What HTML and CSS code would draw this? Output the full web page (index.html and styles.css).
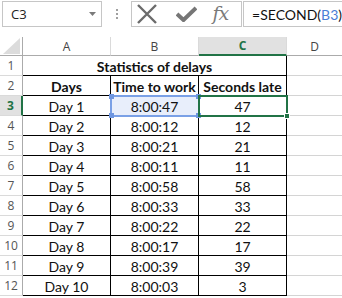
FILE: index.html
```html
<!DOCTYPE html>
<html>
<head>
<meta charset="utf-8">
<link rel="stylesheet" href="styles.css">
</head>
<body>
<div class="app">
  <div class="fbar">
    <div class="namebox">
      <span class="ref-name">C3</span>
      <svg class="drop" width="7" height="4" viewBox="0 0 7 4"><path d="M0 0H7L3.5 4Z" fill="#7a7a7a"/></svg>
    </div>
    <div class="grip"><i></i><i></i><i></i></div>
    <div class="btns">
      <svg class="ic-x" width="22" height="20" viewBox="0 0 22 20"><path d="M2 1L20 19M20 1L2 19" stroke="#6b6b6b" stroke-width="2.4" fill="none"/></svg>
      <svg class="ic-ok" width="21" height="16" viewBox="0 0 21 16"><path d="M1 8L7.5 14L20 2" stroke="#767676" stroke-width="4" fill="none" stroke-linejoin="miter"/></svg>
      <span class="fx">fx</span>
    </div>
    <div class="formula">=SECOND(<span class="b3">B3</span>)</div>
  </div>
  <div class="sheet">
    <div class="ch corner"><svg width="18" height="17" viewBox="0 0 18 17"><path d="M18 1V17H1Z" fill="#dcdcdc"/></svg></div>
    <div class="ch">A</div>
    <div class="ch">B</div>
    <div class="ch sel">C</div>
    <div class="ch last">D</div>

    <div class="rh">1</div>
    <div class="c title span3">Statistics of delays</div>
    <div class="c g"></div>

    <div class="rh">2</div>
    <div class="c bb br bold">Days</div>
    <div class="c bb br bold">Time to work</div>
    <div class="c bb br bold">Seconds late</div>
    <div class="c g"></div>

    <div class="rh sel">3</div>
    <div class="c bb br">Day 1</div>
    <div class="c bb br hl">8:00:47</div>
    <div class="c bb br">47</div>
    <div class="c g"></div>

    <div class="rh">4</div>
    <div class="c bb br">Day 2</div>
    <div class="c bb br">8:00:12</div>
    <div class="c bb br">12</div>
    <div class="c g"></div>

    <div class="rh">5</div>
    <div class="c bb br">Day 3</div>
    <div class="c bb br">8:00:21</div>
    <div class="c bb br">21</div>
    <div class="c g"></div>

    <div class="rh">6</div>
    <div class="c bb br">Day 4</div>
    <div class="c bb br">8:00:11</div>
    <div class="c bb br">11</div>
    <div class="c g"></div>

    <div class="rh">7</div>
    <div class="c bb br">Day 5</div>
    <div class="c bb br">8:00:58</div>
    <div class="c bb br">58</div>
    <div class="c g"></div>

    <div class="rh">8</div>
    <div class="c bb br">Day 6</div>
    <div class="c bb br">8:00:33</div>
    <div class="c bb br">33</div>
    <div class="c g"></div>

    <div class="rh">9</div>
    <div class="c bb br">Day 7</div>
    <div class="c bb br">8:00:22</div>
    <div class="c bb br">22</div>
    <div class="c g"></div>

    <div class="rh">10</div>
    <div class="c bb br">Day 8</div>
    <div class="c bb br">8:00:17</div>
    <div class="c bb br">17</div>
    <div class="c g"></div>

    <div class="rh">11</div>
    <div class="c bb br">Day 9</div>
    <div class="c bb br">8:00:39</div>
    <div class="c bb br">39</div>
    <div class="c g"></div>

    <div class="rh">12</div>
    <div class="c bb br">Day 10</div>
    <div class="c bb br">8:00:03</div>
    <div class="c bb br">3</div>
    <div class="c g"></div>

    <div class="refbox"><i class="h tl"></i><i class="h tr"></i><i class="h bl"></i><i class="h br2"></i></div>
    <div class="selbox"><i class="fill"></i></div>
  </div>
</div>
</body>
</html>
```
FILE: styles.css
```css
* { box-sizing: border-box; }
html, body { margin: 0; padding: 0; background: #fff; }
.app { width: 342px; height: 298px; overflow: hidden; position: relative; background: #fff; }

.fbar { display: flex; align-items: flex-start; height: 37px; padding-top: 1px; }
.namebox {
  margin-left: 2px; width: 102px; height: 26px;
  border: 1px solid #c6c6c6;
  display: flex; align-items: center; justify-content: space-between;
  padding: 0 5px 0 8px;
  font-family: "Open Sans", "DejaVu Sans", sans-serif; font-size: 13px; color: #222;
}
.namebox .drop { margin-top: -1px; }
.grip { width: 30px; height: 26px; display: flex; flex-direction: column; align-items: center; justify-content: center; gap: 2px; }
.grip i { display: block; width: 2px; height: 2px; background: #a0a0a0; }
.btns {
  width: 113px; height: 26px; border: 1px solid #c6c6c6;
  display: flex; align-items: center; padding-left: 4px;
}
.ic-ok { margin-left: 18px; }
.fx {
  margin-left: 15px; font-family: "DejaVu Serif", "Liberation Serif", serif; font-style: italic;
  font-size: 19px; color: #7a7a7a; letter-spacing: -1px; line-height: 1; margin-top: -2px;
}
.formula {
  margin-left: 1px; flex: 1; height: 26px; border: 1px solid #c6c6c6; border-right: none;
  padding-left: 8px; display: flex; align-items: center;
  font-family: "Lato", "Carlito", sans-serif; font-size: 14px; color: #111;
}
.b3 { color: #4a7ed6; }

.sheet {
  position: relative;
  display: grid;
  grid-template-columns: 23px 88px 88px 88px 55px;
  grid-template-rows: 19px repeat(12, 20px);
  font-family: "Lato", "Carlito", sans-serif; font-size: 14px; color: #111;
}
.ch {
  border-right: 1px solid #dadada; border-bottom: 1px solid #ababab;
  display: flex; align-items: center; justify-content: center;
  font-family: "Open Sans", "DejaVu Sans", sans-serif; font-size: 12px; color: #444;
}
.ch.corner { justify-content: flex-end; align-items: flex-end; padding: 0 2px 1px 0; border-right-color: #ababab; }
.ch.corner svg { display: block; }
.ch.sel { background: #e1e1e1; color: #217346; font-weight: bold; border-bottom: 2px solid #217346; }
.ch.last { border-right: none; }
.rh {
  border-right: 1px solid #ababab; border-bottom: 1px solid #dadada;
  display: flex; align-items: center; justify-content: center;
  font-family: "Open Sans", "DejaVu Sans", sans-serif; font-size: 12px; color: #555;
}
.rh.sel { background: #e1e1e1; color: #217346; font-weight: bold; border-right: 2px solid #217346; }
.c {
  display: flex; align-items: center; justify-content: center;
  border-bottom: 1px solid #d4d4d4; border-right: 1px solid #d4d4d4;
  white-space: nowrap; padding-top: 1px;
}
.c.bb { border-bottom: 1px solid #000; }
.c.br { border-right: 1px solid #000; }
.c.g { border-right: none; }
.bold { font-weight: bold; }
.title { grid-column: span 3; font-weight: bold; border-bottom: 1px solid #000; border-right: 1px solid #000; }
.hl { background: #e8eefb; }

.refbox {
  position: absolute; left: 110px; top: 58px; width: 90px; height: 22px;
  border: 2px solid #7aa0e6; pointer-events: none;
}
.refbox .h { position: absolute; width: 5px; height: 5px; background: #6f96e0; }
.refbox .tl { left: -3px; top: -3px; }
.refbox .tr { right: -3px; top: -3px; }
.refbox .bl { left: -3px; bottom: -3px; }
.refbox .br2 { right: -3px; bottom: -3px; }
.selbox {
  position: absolute; left: 198px; top: 58px; width: 90px; height: 22px;
  border: 2px solid #217346;
}
.selbox .fill { position: absolute; right: -4px; bottom: -4px; width: 6px; height: 6px; background: #217346; border: 1px solid #fff; }
```
